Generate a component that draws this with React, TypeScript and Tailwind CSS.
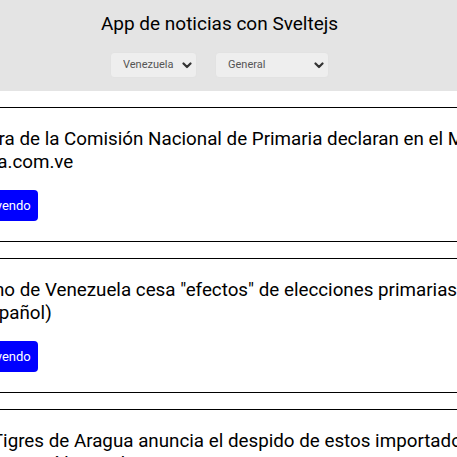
import React, { useState } from 'react';

interface Noticia {
  id: number;
  title: string;
  url: string;
}

const noticias: Noticia[] = [
  {
    id: 1,
    title: 'Directora de la Comisión Nacional de Primaria declaran en el Ministerio Público - Primicia.com.ve',
    url: '#',
  },
  {
    id: 2,
    title: 'Gobierno de Venezuela cesa "efectos" de elecciones primarias de la oposición - DW\u00a0(español)',
    url: '#',
  },
  {
    id: 3,
    title: 'LVBP: Tigres de Aragua anuncia el despido de estos importados para la temporada 2023-2024 - Líder en deportes',
    url: '#',
  },
];

function Chevron() {
  return (
    <svg width="10" height="7" viewBox="0 0 10 7" className="pointer-events-none">
      <polyline points="1.5,1.5 5,5 8.5,1.5" fill="none" stroke="#333" strokeWidth="2.2" strokeLinecap="round" strokeLinejoin="round" />
    </svg>
  );
}

function Selector({ value, options, onChange, width }: { value: string; options: string[]; onChange: (v: string) => void; width: string }) {
  return (
    <div className={`relative flex h-[26px] items-center rounded border border-[#e2e2e2] bg-[#eeeeee] ${width}`}>
      <select
        value={value}
        onChange={(e) => onChange(e.target.value)}
        className="h-full w-full appearance-none bg-transparent pl-3 pr-5 text-[11px] text-[#555] outline-none"
      >
        {options.map((o) => (
          <option key={o}>{o}</option>
        ))}
      </select>
      <span className="absolute right-[4px] top-[9px] flex">
        <Chevron />
      </span>
    </div>
  );
}

export default function App() {
  const [pais, setPais] = useState('Venezuela');
  const [categoria, setCategoria] = useState('General');

  return (
    <div className="min-h-screen overflow-hidden bg-white font-[Roboto,sans-serif] text-black">
      <header className="flex flex-col items-center bg-[#e4e4e4] pb-[13px] pr-[18px] pt-3">
        <h1 className="text-[19px] leading-[23px]">App de noticias con Sveltejs</h1>
        <div className="mt-[17px] flex gap-[18px]">
          <Selector value={pais} options={['Venezuela', 'Colombia', 'México']} onChange={setPais} width="w-[87px]" />
          <Selector
            value={categoria}
            options={['General', 'Negocios', 'Entretenimiento', 'Salud', 'Ciencia', 'Deportes', 'Tecnología']}
            onChange={setCategoria}
            width="w-[114px]"
          />
        </div>
      </header>

      <main className="ml-[-90px] mt-4 flex w-[760px] flex-col gap-4">
        {noticias.map((n) => (
          <article key={n.id} className="border border-black p-5 px-7">
            <h2 className="text-[18.8px] leading-[23px]">{n.title}</h2>
            <a
              href={n.url}
              className="mt-4 inline-block rounded bg-[#0000ff] px-[7px] py-2 text-[13px] leading-[15px] text-white"
            >
              Seguir leyendo
            </a>
          </article>
        ))}
      </main>
    </div>
  );
}
